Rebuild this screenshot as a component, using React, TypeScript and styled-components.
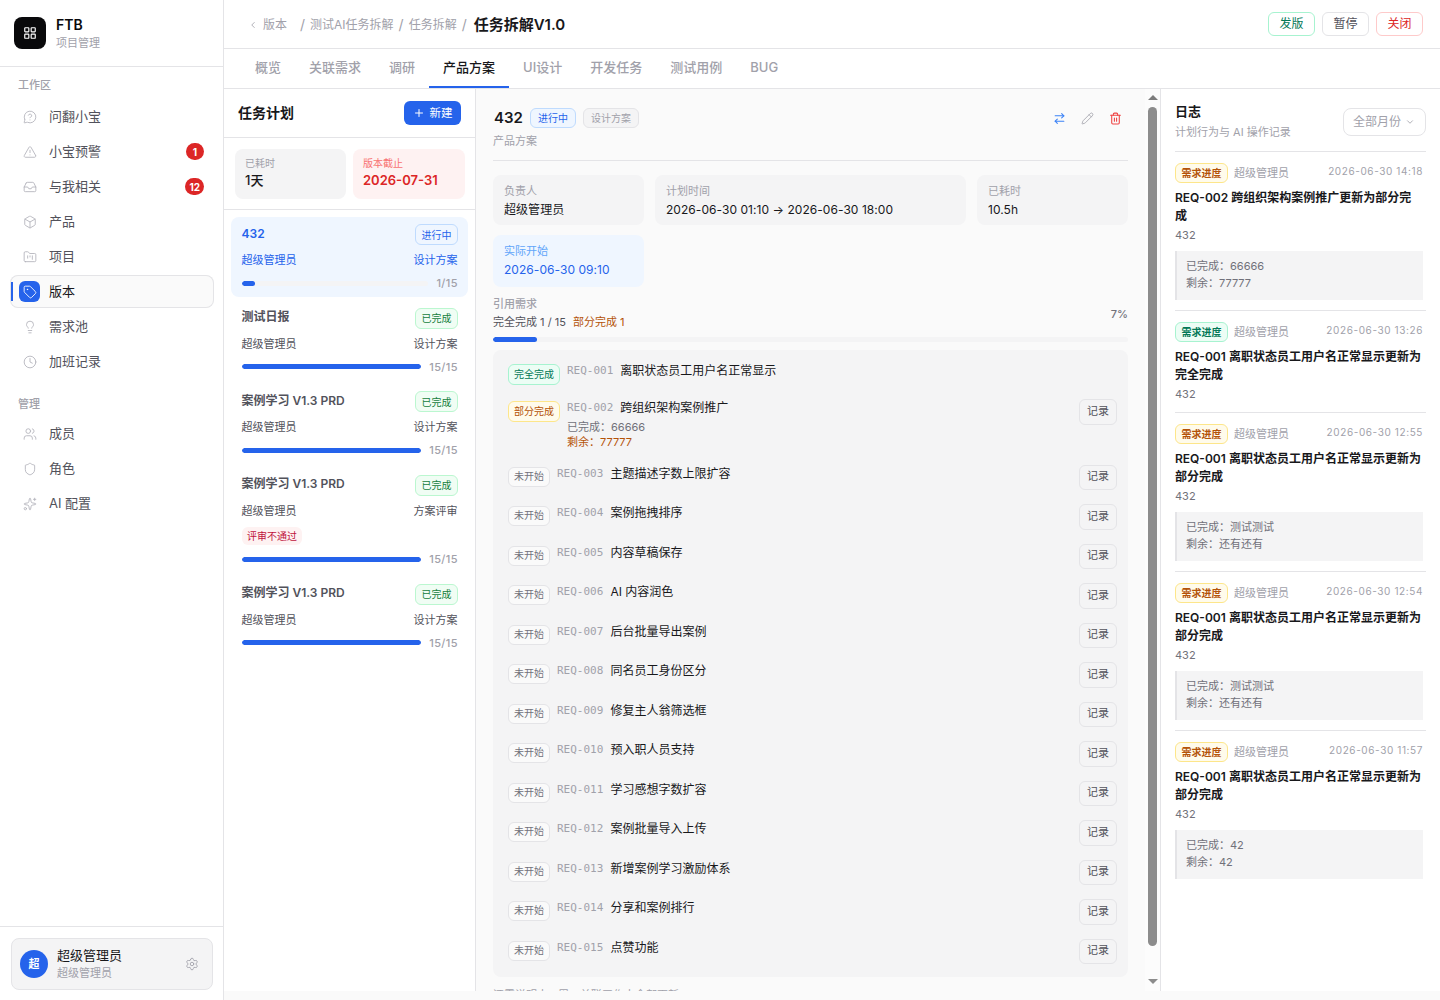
import React from 'react';
import styled, { createGlobalStyle } from 'styled-components';
import {
  LayoutGrid, MessageCircleQuestion, TriangleAlert, Inbox, Box, FolderKanban, Tag, Lightbulb, Clock,
  Users, Shield, Sparkles, Settings, ChevronLeft, ChevronDown, Plus, ArrowRightLeft, Pencil, Trash2,
} from 'lucide-react';

const Global = createGlobalStyle`
  html, body { margin: 0; padding: 0; height: 1000px; overflow: hidden; background: #fafafa; }
  body { font-family: Inter, "Noto Sans CJK SC", sans-serif; color: #18181b; font-size: 12px; line-height: 16px; }
  * { box-sizing: border-box; }
`;

const Page = styled.div`display: flex; width: 1440px; height: 1000px; overflow: hidden;`;
const Sidebar = styled.aside`width: 224px; height: 1000px; flex: none; background: #fff; border-right: 1px solid #e4e4e7; display: flex; flex-direction: column;`;
const Brand = styled.div`height: 67px; flex: none; border-bottom: 1px solid #e4e4e7; display: flex; align-items: center; gap: 10px; padding: 0 14px;`;
const Logo = styled.div`width: 32px; height: 32px; border-radius: 8px; background: #09090b; color: #fff; display: flex; align-items: center; justify-content: center;`;
const BrandText = styled.div`display: flex; flex-direction: column; padding-top: 1px;`;
const BrandName = styled.div`font-size: 14px; font-weight: 600; line-height: 18px; color: #09090b;`;
const BrandSub = styled.div`font-size: 11px; line-height: 18px; color: #a1a1aa;`;
const NavArea = styled.nav`flex: 1; padding: 11px 9px 0 10px;`;
const SectionLabel = styled.div<{ $top?: number; $bottom?: number }>`font-size: 11px; line-height: 14px; color: #a1a1aa; padding-left: 8px; margin-top: ${p => p.$top ?? 0}px; margin-bottom: ${p => p.$bottom ?? 8}px; font-weight: 500;`;
const NavItem = styled.div<{ $active?: boolean }>`
  position: relative; height: 33px; margin-bottom: 2px; display: flex; align-items: center; gap: 9px; padding: 0 10px 0 9px;
  border-radius: 8px; font-size: 13px; color: ${p => (p.$active ? '#18181b' : '#52525b')};
  background: ${p => (p.$active ? '#fafafa' : 'transparent')};
  box-shadow: ${p => (p.$active ? 'inset 0 0 0 1px #e4e4e7' : 'none')};
`;
const NavMark = styled.span`position: absolute; left: 1px; top: 7px; width: 1.5px; height: 19px; background: #2563eb;`;
const NavIcon = styled.span<{ $active?: boolean }>`
  width: 21px; height: 21px; flex: none; border-radius: 6px; display: flex; align-items: center; justify-content: center;
  color: ${p => (p.$active ? '#fff' : '#b4b4bb')}; background: ${p => (p.$active ? '#2563eb' : 'transparent')};
`;
const NavText = styled.span`flex: 1; margin-top: -2px;`;
const Count = styled.span`min-width: 18px; height: 17px; padding: 0 4px; border-radius: 9px; background: #dc2626; color: #fff; font-size: 10px; font-weight: 700; display: flex; align-items: center; justify-content: center;`;
const UserArea = styled.div`flex: none; height: 74px; border-top: 1px solid #e4e4e7; padding: 11px 10px 0 11px;`;
const UserCard = styled.div`height: 52px; background: #f4f4f5; border: 1px solid #e4e4e7; border-radius: 8px; display: flex; align-items: center; padding: 0 13px 0 8px; gap: 9px; color: #a1a1aa;`;
const Avatar = styled.div`width: 28px; height: 28px; border-radius: 50%; background: #2563eb; color: #fff; font-size: 11px; font-weight: 700; display: flex; align-items: center; justify-content: center; flex: none;`;
const UserText = styled.div`flex: 1; display: flex; flex-direction: column;`;
const UserName = styled.div`font-size: 13px; line-height: 18px; color: #18181b;`;
const UserSub = styled.div`font-size: 11px; line-height: 18px; color: #a1a1aa;`;

const Main = styled.main`flex: 1; min-width: 0; display: flex; flex-direction: column;`;
const TopBar = styled.header`height: 49px; flex: none; background: #fff; border-bottom: 1px solid #e4e4e7; display: flex; align-items: center; padding: 0 17px 0 24px;`;
const Crumbs = styled.div`flex: 1; display: flex; align-items: center; font-size: 12px; color: #a1a1aa; margin-top: 1px;`;
const Back = styled.span`display: flex; align-items: center; gap: 5px; margin-right: 13px; color: #a1a1aa;`;
const Slash = styled.span`margin-right: 5px; color: #a1a1aa; font-size: 14px;`;
const Crumb = styled.span`margin-right: 5px;`;
const CrumbNow = styled.span`font-size: 15px; font-weight: 600; color: #18181b; margin-left: 2px;`;
const TopActions = styled.div`display: flex; gap: 7px;`;
const tones: Record<string, [string, string]> = {
  green: ['#047857', '#a7f3d0'], gray: ['#52525b', '#e4e4e7'], red: ['#dc2626', '#fecaca'],
};
const TopButton = styled.button<{ $tone: string }>`
  width: 47px; height: 24px; padding: 0; background: #fff; border-radius: 6px; font: inherit; font-size: 12px;
  color: ${p => tones[p.$tone][0]}; border: 1px solid ${p => tones[p.$tone][1]};
`;
const Tabs = styled.div`height: 40px; flex: none; background: #fff; border-bottom: 1px solid #e4e4e7; display: flex; padding-left: 17px;`;
const TabItem = styled.div<{ $active?: boolean }>`
  height: 39px; padding: 0 14px 3px; display: flex; align-items: center; font-size: 13px; font-weight: 500;
  color: ${p => (p.$active ? '#18181b' : '#a1a1aa')};
  box-shadow: ${p => (p.$active ? 'inset 0 -2px 0 #2563eb' : 'none')};
`;
const Body = styled.div`height: 902px; flex: none; display: flex;`;

const TaskPanel = styled.section`width: 252px; flex: none; background: #fff; border-right: 1px solid #e4e4e7; display: flex; flex-direction: column;`;
const TaskHead = styled.div`height: 49px; flex: none; border-bottom: 1px solid #e4e4e7; display: flex; align-items: center; justify-content: space-between; padding: 0 14px;`;
const TaskTitle = styled.div`font-size: 14px; font-weight: 600; color: #18181b;`;
const NewButton = styled.button`width: 57px; height: 24px; background: #2563eb; color: #fff; border: 0; border-radius: 6px; font: inherit; font-size: 11.5px; display: flex; align-items: center; justify-content: center; gap: 5px; padding: 0;`;
const StatRow = styled.div`height: 72px; flex: none; border-bottom: 1px solid #e4e4e7; display: grid; grid-template-columns: 111px 112px; gap: 7px; padding: 11px 0 0 11px; align-content: start;`;
const Stat = styled.div<{ $danger?: boolean }>`
  height: 50px; padding: 7px 10px; border-radius: 8px; background: ${p => (p.$danger ? '#fef2f2' : '#f4f4f5')};
`;
const StatLabel = styled.div<{ $danger?: boolean }>`font-size: 10px; line-height: 14px; color: ${p => (p.$danger ? '#f87171' : '#a1a1aa')};`;
const StatValue = styled.div<{ $danger?: boolean }>`font-size: 13px; line-height: 20px; color: ${p => (p.$danger ? '#dc2626' : '#18181b')}; font-weight: ${p => (p.$danger ? 600 : 500)};`;
const TaskList = styled.div`padding: 7px 7px 0; display: flex; flex-direction: column; gap: 4px;`;
const TaskCard = styled.div<{ $active?: boolean }>`
  padding: 7px 10px 6.5px 11px; border-radius: 8px; background: ${p => (p.$active ? '#eff6ff' : 'transparent')};
  color: ${p => (p.$active ? '#2563eb' : '#52525b')};
`;
const TaskTop = styled.div`display: flex; justify-content: space-between; align-items: flex-start; height: 21px;`;
const TaskName = styled.div`font-size: 12px; font-weight: 600; line-height: 16px; margin: 1.5px 0 0 -0.5px;`;
const Pill = styled.span<{ $c: string; $b: string; $bg: string; $h?: number; $pad?: number }>`
  display: inline-flex; align-items: center; justify-content: center; flex: none; height: ${p => p.$h ?? 21}px; padding: 0 ${p => p.$pad ?? 5.5}px; border-radius: 6px; font-size: 10px; white-space: nowrap;
  color: ${p => p.$c}; border: 1px solid ${p => p.$b}; background: ${p => p.$bg};
`;
const TaskMeta = styled.div`display: flex; justify-content: space-between; font-size: 11px; line-height: 18px; margin: 6px 0.5px 0 -0.5px;`;
const RejectTag = styled.div`width: fit-content; height: 18px; line-height: 18px; margin-top: 7.5px; padding: 0 5px; border-radius: 6px; background: #fef2f2; color: #be123c; font-size: 10px;`;
const BarRow = styled.div`display: flex; align-items: center; gap: 8px; height: 14px; margin-top: 7px;`;
const Track = styled.div`flex: 1; height: 5px; border-radius: 3px; background: #f4f4f5; overflow: hidden;`;
const Fill = styled.div`height: 100%; border-radius: 3px; background: #2563eb;`;
const BarLabel = styled.span`font-size: 11px; letter-spacing: 0.4px; font-weight: 500; color: #a1a1aa;`;

const Detail = styled.section`width: 685px; flex: none; display: flex; background: #fafafa; border-right: 1px solid #e4e4e7;`;
const DetailScroll = styled.div`flex: 1; min-width: 0; overflow: hidden; padding: 16px 17px 0;`;
const Rail = styled.div`width: 15px; flex: none; background: #fcfcfc; display: flex; flex-direction: column;`;
const RailEnd = styled.div`height: 18px; flex: none; display: flex; justify-content: center; padding-top: 6px;`;
const ArrowUp = styled.span`width: 0; height: 0; border-left: 5px solid transparent; border-right: 5px solid transparent; border-bottom: 5px solid #7c7c7c;`;
const ArrowDown = styled.span`width: 0; height: 0; border-left: 5px solid transparent; border-right: 5px solid transparent; border-top: 5px solid #8c8c8c;`;
const RailTrack = styled.div`flex: 1; padding: 0 3px;`;
const RailThumb = styled.div`height: 839px; border-radius: 5px; background: #8c8c8c;`;
const DetailHead = styled.div`height: 56px; border-bottom: 1px solid #e4e4e7; display: flex; justify-content: space-between;`;
const HeadLine = styled.div`display: flex; align-items: center; gap: 7px; height: 25px;`;
const DetailNum = styled.div`font-size: 15px; font-weight: 600; color: #18181b; margin-left: 1px;`;
const DetailSub = styled.div`font-size: 11px; line-height: 16px; margin-top: 3px; color: #a1a1aa;`;
const HeadIcons = styled.div`display: flex; gap: 15px; padding: 7px 6px 0 0;`;
const IconTone = styled.span<{ $c: string }>`color: ${p => p.$c}; display: flex; height: 13px;`;
const InfoGrid = styled.div`display: grid; grid-template-columns: 151px 1fr 151px; gap: 10px 11px; margin-top: 14px;`;
const InfoCard = styled.div<{ $blue?: boolean }>`
  padding: 8px 11px 0; height: ${p => (p.$blue ? 52 : 50)}px; border-radius: 8px; background: ${p => (p.$blue ? '#eff6ff' : '#f4f4f5')};
`;
const InfoLabel = styled.div<{ $blue?: boolean }>`font-size: 11px; line-height: 16px; color: ${p => (p.$blue ? '#60a5fa' : '#a1a1aa')};`;
const InfoValue = styled.div<{ $blue?: boolean }>`font-size: 12px; line-height: 20px; letter-spacing: 0.05px; margin-top: 1px; color: ${p => (p.$blue ? '#2563eb' : '#18181b')};`;
const RefHead = styled.div`display: flex; justify-content: space-between; align-items: center; margin-top: 9px;`;
const RefLabel = styled.div`font-size: 11px; line-height: 17px; color: #a1a1aa; font-weight: 500;`;
const RefStats = styled.div`font-size: 11px; line-height: 18px; color: #52525b;`;
const RefPartial = styled.span`color: #b45309; margin-left: 7px;`;
const RefPct = styled.div`font-size: 11px; color: #71717a; font-weight: 500;`;
const RefTrack = styled.div`height: 5px; border-radius: 3px; background: #f4f4f5; margin-top: 6px; overflow: hidden;`;
const ReqList = styled.div`margin-top: 8px; padding: 12px 11px 13px 15px; background: #f4f4f5; border-radius: 8px; display: flex; flex-direction: column; gap: 14px;`;
const ReqRow = styled.div`display: flex; align-items: flex-start; min-height: 22.5px;`;
const ReqStatus = styled.div`flex: none; margin-top: 2px; display: flex; & > span { padding-bottom: 2px; }`;
const ReqBody = styled.div`flex: 1; margin-left: 7px; padding-top: 2px;`;
const ReqLine = styled.div`display: flex; align-items: center; gap: 7px; height: 14px;`;
const ReqCode = styled.span`font-family: "DejaVu Sans Mono", monospace; font-size: 11px; color: #a1a1aa;`;
const ReqName = styled.span`font-size: 12px; color: #18181b;`;
const ReqNote = styled.div<{ $warn?: boolean }>`font-size: 11px; line-height: 15.5px; color: ${p => (p.$warn ? '#b45309' : '#71717a')};`;
const ReqNotes = styled.div`margin-top: 4.5px;`;
const RecordButton = styled.button`width: 38px; height: 25.5px; flex: none; background: #f4f4f5; border: 1px solid #e4e4e7; border-radius: 6px; font: inherit; font-size: 11px; color: #52525b; padding: 0 0 2px;`;
const Footnote = styled.div`margin-top: 10px; height: 34px; font-size: 11px; line-height: 16px; color: #a1a1aa;`;

const LogPanel = styled.section`flex: 1; min-width: 0; background: #fff; padding: 13px 14px 0;`;
const LogHead = styled.div`height: 50px; border-bottom: 1px solid #e4e4e7; display: flex; justify-content: space-between; align-items: flex-start;`;
const LogTitle = styled.div`font-size: 13px; font-weight: 600; line-height: 18px; color: #18181b;`;
const LogSub = styled.div`font-size: 11px; line-height: 17px; margin-top: 4px; color: #a1a1aa;`;
const MonthSelect = styled.div`width: 83px; height: 28px; margin-top: 6px; border: 1px solid #e4e4e7; border-radius: 8px; display: flex; align-items: center; justify-content: space-between; padding: 0 10px 0 9px; font-size: 12px; color: #a1a1aa;`;
const LogItem = styled.article`padding: 11px 3px 10px 0; border-bottom: 1px solid #e4e4e7; &:last-child { border-bottom: 0; }`;
const LogTop = styled.div`display: flex; align-items: center; gap: 6px; height: 20px;`;
const LogTag = styled.span<{ $green?: boolean }>`
  display: inline-flex; align-items: center; justify-content: center; width: 53px; height: 20px; border-radius: 6px; font-size: 10px; font-weight: 600;
  color: ${p => (p.$green ? '#047857' : '#b45309')}; background: ${p => (p.$green ? '#ecfdf5' : '#fffbeb')}; border: 1px solid ${p => (p.$green ? '#a7f3d0' : '#fde68a')};
`;
const LogAuthor = styled.span`flex: 1; font-size: 11px; color: #a1a1aa;`;
const LogTime = styled.span`font-size: 10px; letter-spacing: 0.6px; color: #a1a1aa; margin-top: -5px;`;
const LogText = styled.div`font-size: 12px; font-weight: 600; line-height: 18px; margin-top: 6px; color: #18181b;`;
const LogRef = styled.div`font-size: 11px; line-height: 16px; margin-top: 2px; color: #71717a;`;
const LogBox = styled.div`margin-top: 8px; padding: 7px 9px 8px; border-left: 2px solid #e4e4e7; background: #f4f4f5; font-size: 11px; line-height: 17px; color: #71717a;`;

const workspace = [
  { label: '问翻小宝', Icon: MessageCircleQuestion },
  { label: '小宝预警', Icon: TriangleAlert, count: 1 },
  { label: '与我相关', Icon: Inbox, count: 12 },
  { label: '产品', Icon: Box },
  { label: '项目', Icon: FolderKanban },
  { label: '版本', Icon: Tag, active: true },
  { label: '需求池', Icon: Lightbulb },
  { label: '加班记录', Icon: Clock },
];
const admin = [
  { label: '成员', Icon: Users },
  { label: '角色', Icon: Shield },
  { label: 'AI 配置', Icon: Sparkles },
];
const tabs = ['概览', '关联需求', '调研', '产品方案', 'UI设计', '开发任务', '测试用例', 'BUG'];
const doneTasks = [
  { name: '测试日报', stage: '设计方案' },
  { name: '案例学习 V1.3 PRD', stage: '设计方案' },
  { name: '案例学习 V1.3 PRD', stage: '方案评审', rejected: true },
  { name: '案例学习 V1.3 PRD', stage: '设计方案' },
];
const reqs = [
  '主题描述字数上限扩容', '案例拖拽排序', '内容草稿保存', 'AI 内容润色', '后台批量导出案例', '同名员工身份区分', '修复主人翁筛选框',
  '预入职人员支持', '学习感想字数扩容', '案例批量导入上传', '新增案例学习激励体系', '分享和案例排行', '点赞功能',
];
const logs = [
  { time: '2026-06-30 14:18', text: 'REQ-002 跨组织架构案例推广更新为部分完成', done: '66666', left: '77777' },
  { time: '2026-06-30 13:26', text: 'REQ-001 离职状态员工用户名正常显示更新为完全完成', green: true },
  { time: '2026-06-30 12:55', text: 'REQ-001 离职状态员工用户名正常显示更新为部分完成', done: '测试测试', left: '还有还有' },
  { time: '2026-06-30 12:54', text: 'REQ-001 离职状态员工用户名正常显示更新为部分完成', done: '测试测试', left: '还有还有' },
  { time: '2026-06-30 11:57', text: 'REQ-001 离职状态员工用户名正常显示更新为部分完成', done: '42', left: '42' },
];

const greenPill = { $c: '#15803d', $b: '#bbf7d0', $bg: '#f0fdf4' };
const bluePill = { $c: '#2563eb', $b: '#bfdbfe', $bg: '#eff6ff' };

function Nav({ item }: { item: { label: string; Icon: React.ComponentType<any>; count?: number; active?: boolean } }) {
  const { label, Icon, count, active } = item;
  return (
    <NavItem $active={active}>
      {active && <NavMark />}
      <NavIcon $active={active}><Icon size={14} strokeWidth={1.5} /></NavIcon>
      <NavText>{label}</NavText>
      {count ? <Count>{count}</Count> : null}
    </NavItem>
  );
}

export default function App() {
  return (
    <Page>
      <Global />
      <Sidebar>
        <Brand>
          <Logo><LayoutGrid size={14} strokeWidth={2} /></Logo>
          <BrandText>
            <BrandName>FTB</BrandName>
            <BrandSub>项目管理</BrandSub>
          </BrandText>
        </Brand>
        <NavArea>
          <SectionLabel>工作区</SectionLabel>
          {workspace.map(i => <Nav key={i.label} item={i} />)}
          <SectionLabel $top={19} $bottom={6}>管理</SectionLabel>
          {admin.map(i => <Nav key={i.label} item={i} />)}
        </NavArea>
        <UserArea>
          <UserCard>
            <Avatar>超</Avatar>
            <UserText>
              <UserName>超级管理员</UserName>
              <UserSub>超级管理员</UserSub>
            </UserText>
            <Settings size={14} strokeWidth={1.5} />
          </UserCard>
        </UserArea>
      </Sidebar>
      <Main>
        <TopBar>
          <Crumbs>
            <Back><ChevronLeft size={10} />版本</Back>
            <Slash>/</Slash><Crumb>测试AI任务拆解</Crumb>
            <Slash>/</Slash><Crumb>任务拆解</Crumb>
            <Slash>/</Slash><CrumbNow>任务拆解V1.0</CrumbNow>
          </Crumbs>
          <TopActions>
            <TopButton $tone="green">发版</TopButton>
            <TopButton $tone="gray">暂停</TopButton>
            <TopButton $tone="red">关闭</TopButton>
          </TopActions>
        </TopBar>
        <Tabs>
          {tabs.map(t => <TabItem key={t} $active={t === '产品方案'}>{t}</TabItem>)}
        </Tabs>
        <Body>
          <TaskPanel>
            <TaskHead>
              <TaskTitle>任务计划</TaskTitle>
              <NewButton><Plus size={12} />新建</NewButton>
            </TaskHead>
            <StatRow>
              <Stat><StatLabel>已耗时</StatLabel><StatValue>1天</StatValue></Stat>
              <Stat $danger><StatLabel $danger>版本截止</StatLabel><StatValue $danger>2026-07-31</StatValue></Stat>
            </StatRow>
            <TaskList>
              <TaskCard $active>
                <TaskTop><TaskName>432</TaskName><Pill {...bluePill}>进行中</Pill></TaskTop>
                <TaskMeta><span>超级管理员</span><span>设计方案</span></TaskMeta>
                <BarRow><Track><Fill style={{ width: '7%' }} /></Track><BarLabel>1/15</BarLabel></BarRow>
              </TaskCard>
              {doneTasks.map((t, i) => (
                <TaskCard key={i}>
                  <TaskTop><TaskName>{t.name}</TaskName><Pill {...greenPill}>已完成</Pill></TaskTop>
                  <TaskMeta><span>超级管理员</span><span>{t.stage}</span></TaskMeta>
                  {t.rejected && <RejectTag>评审不通过</RejectTag>}
                  <BarRow><Track><Fill style={{ width: '100%' }} /></Track><BarLabel>15/15</BarLabel></BarRow>
                </TaskCard>
              ))}
            </TaskList>
          </TaskPanel>
          <Detail>
            <DetailScroll>
              <DetailHead>
                <div>
                  <HeadLine>
                    <DetailNum>432</DetailNum>
                    <Pill {...bluePill} $h={20} $pad={7}>进行中</Pill>
                    <Pill $c="#a1a1aa" $b="#e4e4e7" $bg="#f4f4f5" $h={20} $pad={7}>设计方案</Pill>
                  </HeadLine>
                  <DetailSub>产品方案</DetailSub>
                </div>
                <HeadIcons>
                  <IconTone $c="#3b82f6"><ArrowRightLeft size={13} strokeWidth={2} /></IconTone>
                  <IconTone $c="#a1a1aa"><Pencil size={13} strokeWidth={1.5} /></IconTone>
                  <IconTone $c="#ef4444"><Trash2 size={13} strokeWidth={2} /></IconTone>
                </HeadIcons>
              </DetailHead>
              <InfoGrid>
                <InfoCard><InfoLabel>负责人</InfoLabel><InfoValue>超级管理员</InfoValue></InfoCard>
                <InfoCard><InfoLabel>计划时间</InfoLabel><InfoValue>2026-06-30 01:10 → 2026-06-30 18:00</InfoValue></InfoCard>
                <InfoCard><InfoLabel>已耗时</InfoLabel><InfoValue>10.5h</InfoValue></InfoCard>
                <InfoCard $blue><InfoLabel $blue>实际开始</InfoLabel><InfoValue $blue>2026-06-30 09:10</InfoValue></InfoCard>
              </InfoGrid>
              <RefHead>
                <div>
                  <RefLabel>引用需求</RefLabel>
                  <RefStats>完全完成 1 / 15<RefPartial>部分完成 1</RefPartial></RefStats>
                </div>
                <RefPct>7%</RefPct>
              </RefHead>
              <RefTrack><Fill style={{ width: '7%' }} /></RefTrack>
              <ReqList>
                <ReqRow>
                  <ReqStatus><Pill $c="#047857" $b="#a7f3d0" $bg="#ecfdf5" $pad={5}>完全完成</Pill></ReqStatus>
                  <ReqBody><ReqLine><ReqCode>REQ-001</ReqCode><ReqName>离职状态员工用户名正常显示</ReqName></ReqLine></ReqBody>
                </ReqRow>
                <ReqRow>
                  <ReqStatus><Pill $c="#b45309" $b="#fde68a" $bg="#fffbeb" $pad={5}>部分完成</Pill></ReqStatus>
                  <ReqBody>
                    <ReqLine><ReqCode>REQ-002</ReqCode><ReqName>跨组织架构案例推广</ReqName></ReqLine>
                    <ReqNotes>
                      <ReqNote>已完成：66666</ReqNote>
                      <ReqNote $warn>剩余：77777</ReqNote>
                    </ReqNotes>
                  </ReqBody>
                  <RecordButton>记录</RecordButton>
                </ReqRow>
                {reqs.map((name, i) => (
                  <ReqRow key={name}>
                    <ReqStatus><Pill $c="#71717a" $b="#e4e4e7" $bg="#fafafa" $h={20} $pad={5}>未开始</Pill></ReqStatus>
                    <ReqBody>
                      <ReqLine><ReqCode>REQ-{String(i + 3).padStart(3, '0')}</ReqCode><ReqName>{name}</ReqName></ReqLine>
                    </ReqBody>
                    <RecordButton>记录</RecordButton>
                  </ReqRow>
                ))}
              </ReqList>
              <Footnote>还需说明人 8周，关联工作人全部更新</Footnote>
            </DetailScroll>
            <Rail>
              <RailEnd><ArrowUp /></RailEnd>
              <RailTrack><RailThumb /></RailTrack>
              <RailEnd><ArrowDown /></RailEnd>
            </Rail>
          </Detail>
          <LogPanel>
            <LogHead>
              <div>
                <LogTitle>日志</LogTitle>
                <LogSub>计划行为与 AI 操作记录</LogSub>
              </div>
              <MonthSelect>全部月份<ChevronDown size={10} /></MonthSelect>
            </LogHead>
            {logs.map(l => (
              <LogItem key={l.time}>
                <LogTop>
                  <LogTag $green={l.green}>需求进度</LogTag>
                  <LogAuthor>超级管理员</LogAuthor>
                  <LogTime>{l.time}</LogTime>
                </LogTop>
                <LogText>{l.text}</LogText>
                <LogRef>432</LogRef>
                {l.done && <LogBox>已完成：{l.done}<br />剩余：{l.left}</LogBox>}
              </LogItem>
            ))}
          </LogPanel>
        </Body>
      </Main>
    </Page>
  );
}
